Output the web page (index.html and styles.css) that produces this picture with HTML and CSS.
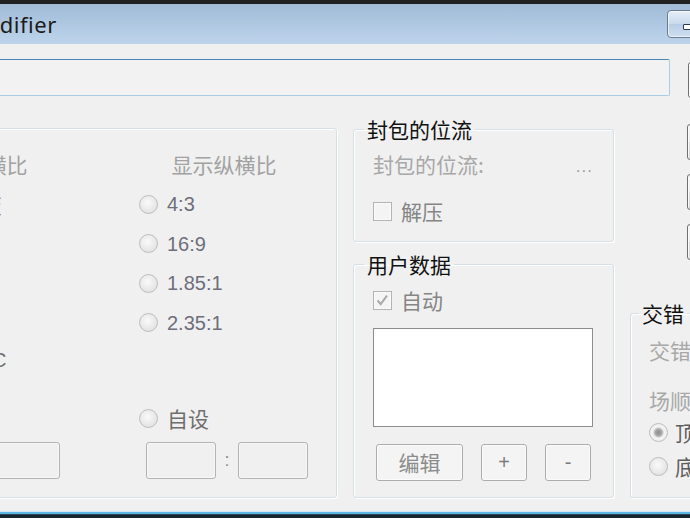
FILE: index.html
```html
<!DOCTYPE html>
<html lang="zh-CN">
<head>
<meta charset="utf-8">
<title>Modifier</title>
<link rel="stylesheet" href="styles.css">
</head>
<body>
<div class="window">
  <div class="topedge"></div>
  <div class="titlebar">
    <span class="title">odifier</span>
    <span class="minbtn"><span class="minglyph"></span></span>
  </div>
  <div class="content">
    <div class="row1">
      <div class="pathfield"></div>
      <button class="sidebtn top"></button>
    </div>
    <div class="main">
      <div class="group aspect">
        <div class="col col-left">
          <div class="colhead">原始纵横比</div>
          <div class="radio-row first"><span class="radio"></span><span class="clabel">保持不变</span></div>
          <div class="note">PAL/NTSC</div>
          <div class="fields left-fields"><span class="field wide"></span></div>
        </div>
        <div class="col col-right">
          <div class="colhead">显示纵横比</div>
          <div class="radio-row first"><span class="radio"></span><span class="rlabel">4:3</span></div>
          <div class="radio-row"><span class="radio"></span><span class="rlabel">16:9</span></div>
          <div class="radio-row"><span class="radio"></span><span class="rlabel">1.85:1</span></div>
          <div class="radio-row"><span class="radio"></span><span class="rlabel">2.35:1</span></div>
          <div class="radio-row custom"><span class="radio"></span><span class="clabel dark">自设</span></div>
          <div class="fields"><span class="field"></span><span class="colon">:</span><span class="field"></span></div>
        </div>
      </div>
      <div class="midcol">
        <fieldset class="box box1">
          <legend>封包的位流</legend>
          <div class="inner">
            <div class="line spread"><span class="glabel">封包的位流:</span><span class="dots">...</span></div>
            <div class="check-row gap21"><span class="check"></span><span class="clabel">解压</span></div>
          </div>
        </fieldset>
        <fieldset class="box box2">
          <legend>用户数据</legend>
          <div class="inner inner2">
            <div class="check-row"><span class="check on"><svg viewBox="0 0 19 19" width="17" height="17"><path d="M4 9.5 L7.5 13.5 L14.5 4" fill="none" stroke="#a9a9a9" stroke-width="2.2"/></svg></span><span class="clabel">自动</span></div>
            <div class="listbox"></div>
            <div class="btnrow">
              <button class="pbtn edit">编辑</button>
              <button class="pbtn small">+</button>
              <button class="pbtn small">-</button>
            </div>
          </div>
        </fieldset>
      </div>
      <div class="rightcol">
        <button class="sidebtn stack first"></button>
        <button class="sidebtn stack"></button>
        <button class="sidebtn stack"></button>
        <fieldset class="box box3">
          <legend>交错</legend>
          <div class="inner inner3">
            <div class="line"><span class="glabel">交错</span></div>
            <div class="line field-order"><span class="glabel">场顺</span></div>
            <div class="radio-row r1"><span class="radio on"></span><span class="clabel darker">顶场</span></div>
            <div class="radio-row r2"><span class="radio"></span><span class="clabel darker">底场</span></div>
          </div>
        </fieldset>
      </div>
    </div>
    <div class="bottomedge"></div>
  </div>
</div>
</body>
</html>
```
FILE: styles.css
```css
* { box-sizing: border-box; }
html, body { margin: 0; padding: 0; }
body {
  width: 690px;
  height: 518px;
  overflow: hidden;
  background: #f0f0f0;
  font-family: "Noto Sans CJK SC", "Noto Sans", sans-serif;
}
button { font: inherit; padding: 0; }
.window { display: flex; flex-direction: column; height: 518px; }
.topedge { height: 4px; flex: none; background: #202020; }
.titlebar {
  height: 40px;
  flex: none;
  display: flex;
  align-items: flex-start;
  justify-content: space-between;
  background: linear-gradient(#a1bbd7, #bdd4eb);
}
.title {
  font-family: "Noto Sans", sans-serif;
  font-size: 22px;
  letter-spacing: 0.5px;
  line-height: 26px;
  margin-top: 7px;
  margin-left: -14px;
  color: #1b1b1b;
}
.minbtn {
  width: 45px;
  height: 28px;
  margin-top: 6px;
  margin-right: -22px;
  border: 1px solid #6b7b91;
  border-radius: 4px;
  background: linear-gradient(#e6eef8, #c9daee 50%, #b7cce6 51%, #cfdff1);
  box-shadow: inset 0 0 0 1px rgba(255,255,255,0.6);
  display: flex;
}
.minglyph {
  width: 14px;
  height: 6px;
  margin-left: 15px;
  margin-top: 13px;
  border: 1px solid #2a3a52;
  border-radius: 1px;
  background: #fff;
}
.content { flex: 1; display: flex; flex-direction: column; padding-top: 15px; }
.row1 { display: flex; align-items: flex-start; height: 39px; flex: none; }
.pathfield {
  width: 680px;
  height: 37px;
  margin-left: -10px;
  flex: none;
  border: 1px solid #a9cde6;
  border-top-color: #4a88b8;
  border-radius: 2px;
  background: #f2f2f2;
}
.sidebtn {
  width: 60px;
  height: 36px;
  flex: none;
  border: 1px solid #707070;
  border-radius: 3px;
  background: linear-gradient(#f2f2f2, #ebebeb 50%, #dddddd 51%, #cfcfcf);
  box-shadow: inset 0 0 0 1px #fcfcfc;
}
.sidebtn.top { margin-left: 18px; margin-top: 3px; }
.main { display: flex; height: 382px; margin-top: 18px; flex: none; }
.group, .box {
  border: 1px solid #d5dfe5;
  border-radius: 3px;
  box-shadow: inset 1px 1px 0 #fff, 1px 1px 0 #fff;
}
.aspect {
  margin-left: -137px;
  width: 474px;
  flex: none;
  margin-top: 12px;
  display: flex;
  gap: 79px;
  padding: 22px 27px 18px 26px;
}
.col { width: 170px; flex: none; display: flex; flex-direction: column; }
.colhead { height: 26px; line-height: 26px; font-size: 21px; text-align: center; color: #a2a2a2; }
.radio-row { display: flex; align-items: center; height: 26px; gap: 9px; margin-top: 13.5px; }
.radio-row.first { margin-top: 14px; }
.radio-row.custom { margin-top: auto; }
.radio {
  width: 19px;
  height: 19px;
  flex: none;
  border-radius: 50%;
  border: 1px solid #bdbdbd;
  background: radial-gradient(circle at 45% 40%, #fafafa, #e4e4e4 70%, #dcdcdc);
}
.radio.on {
  background: radial-gradient(circle at 50% 50%, #8e8e8e 0, #a5a5a5 3px, #c9c9c9 4.5px, #f3f3f3 5.5px, #ececec 100%);
}
.rlabel { font-family: "Liberation Sans", Arial, sans-serif; font-size: 20px; color: #6e6e7c; line-height: 26px; }
.clabel { font-size: 21px; line-height: 26px; color: #858585; white-space: nowrap; }
.clabel.dark { color: #6e6e6e; }
.clabel.darker { color: #5e5e5e; }
.note {
  font-family: "Liberation Sans", Arial, sans-serif;
  font-size: 20px;
  line-height: 26px;
  color: #6e6e6e;
  padding-left: 20px;
  margin-top: 130px;
}
.fields { display: flex; align-items: center; margin-top: 11px; margin-left: 7px; }
.left-fields { margin-top: auto; justify-content: flex-end; margin-left: 0; }
.field {
  width: 70px;
  height: 37px;
  border: 1px solid #b3b3b3;
  border-radius: 3px;
  background: #f0f0f0;
  box-shadow: inset 0 0 0 1px #f7f7f7;
}
.field.wide { width: 120px; }
.colon { width: 22px; text-align: center; font-family: "Liberation Sans", Arial, sans-serif; font-size: 18px; color: #8e8e8e; }
.midcol { width: 261px; flex: none; margin-left: 16px; display: flex; flex-direction: column; }
.box { margin: 0; padding: 0; min-width: 0; }
.box legend {
  font-size: 21px;
  line-height: 26px;
  height: 26px;
  color: #111;
  padding: 0 3px;
  margin-left: 10px;
}
.box1 { height: 126px; flex: none; }
.box2 { flex: 1; margin-top: 9px; }
.inner { padding: 9px 20px 0 19px; display: flex; flex-direction: column; }
.inner2 { padding-top: 10px; }
.line { display: flex; align-items: center; height: 26px; }
.spread { justify-content: space-between; }
.glabel { font-size: 21px; line-height: 26px; color: #a8a8a8; white-space: nowrap; }
.dots { font-family: "Liberation Sans", Arial, sans-serif; font-size: 17px; color: #a0a0a0; letter-spacing: 1px; margin-top: 6px; }
.check-row { display: flex; align-items: center; height: 26px; gap: 9px; }
.gap21 { margin-top: 21px; }
.check {
  width: 19px;
  height: 19px;
  flex: none;
  border: 1px solid #b4b4b4;
  background: #f4f4f4;
  box-shadow: inset 0 0 0 1px #fafafa;
  display: flex;
  align-items: center;
  justify-content: center;
}
.listbox {
  width: 220px;
  height: 99px;
  margin-top: 15px;
  border: 1px solid #8d8d8d;
  background: #fff;
}
.btnrow { display: flex; margin-top: 17px; }
.pbtn {
  height: 37px;
  border: 1px solid #adadad;
  border-radius: 3px;
  background: #f4f4f4;
  box-shadow: inset 0 0 0 1px #fbfbfb;
  color: #8c8c8c;
  line-height: 33px;
}
.pbtn.edit { width: 87px; margin-left: 3px; font-size: 21px; }
.pbtn.small { width: 46px; margin-left: 18px; font-family: "Liberation Sans", Arial, sans-serif; font-size: 20px; color: #7c7c7c; }
.rightcol { width: 150px; flex: none; margin-left: 16px; display: flex; flex-direction: column; }
.sidebtn.stack { margin-left: 57px; margin-top: 14px; }
.sidebtn.stack.first { margin-top: 8px; }
.box3 { flex: 1; margin-top: 40px; width: 120px; }
.box3 legend { margin-left: 8px; }
.inner3 { padding: 11px 0 0 18px; }
.field-order { margin-top: 24px; }
.inner3 .radio-row { gap: 7px; }
.inner3 .r1 { margin-top: 6px; }
.inner3 .r2 { margin-top: 8px; }
.bottomedge {
  margin-top: auto;
  height: 7px;
  flex: none;
  margin-left: 0;
  background: linear-gradient(#d3e6f2 0 1px, #5cb6e6 1px 3px, #2a4656 3px 4px, #18242d 4px);
}
```
